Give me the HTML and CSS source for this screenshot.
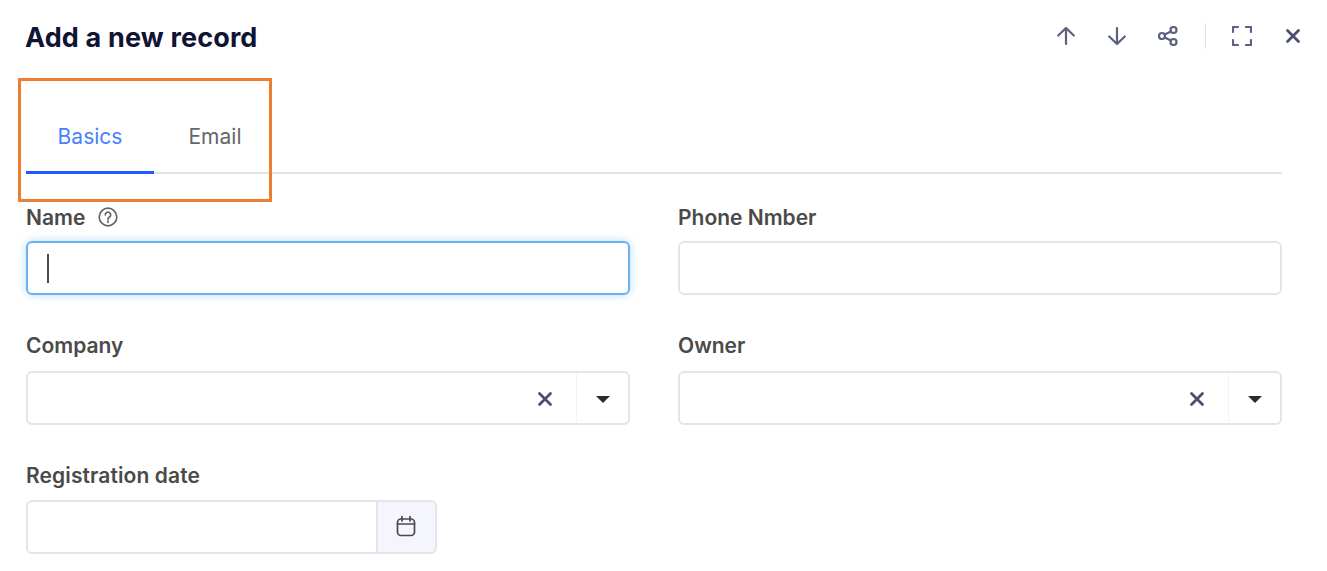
FILE: index.html
```html
<!DOCTYPE html>
<html lang="en">
<head>
<meta charset="utf-8">
<title>Add a new record</title>
<link rel="stylesheet" href="styles.css">
</head>
<body>
<div class="page">
  <header class="header">
    <h1 class="title">Add a new record</h1>
    <div class="actions">
      <svg class="icon" viewBox="0 0 20 20"><path d="M10 18V2M2.200 9.500 10 2l7.800 7.500"/></svg>
      <svg class="icon" viewBox="0 0 20 20"><path d="M10 2v16M2.200 10.500 10 18l7.800-7.500"/></svg>
      <svg class="icon" viewBox="0 0 20 20"><circle cx="4" cy="10" r="3"/><circle cx="15.500" cy="4" r="3"/><circle cx="15.500" cy="16" r="3"/><path d="m6.700 8.600 6.200-3.200M6.700 11.400l6.200 3.200"/></svg>
      <span class="divider"></span>
      <svg class="icon expand" viewBox="0 0 20 20"><path d="M1 6V1h5M14 1h5v5M19 14v5h-5M6 19H1v-5"/></svg>
      <svg class="icon close" viewBox="0 0 20 20"><path d="m4.500 4.500 11 11M15.500 4.500l-11 11"/></svg>
    </div>
  </header>
  <nav class="tabs">
    <span class="tab active">Basics</span>
    <span class="tab">Email</span>
  </nav>
  <form class="form">
    <div class="field">
      <label class="label tight">Name <svg class="help" viewBox="0 0 20 20"><circle cx="10" cy="10" r="8.800"/><path d="M7.300 7.800a2.700 2.700 0 1 1 4.200 2.300c-1 .6-1.500 1.100-1.500 2.200"/><path d="M10 14.200v1.100"/></svg></label>
      <div class="box focus"><span class="caret"></span></div>
    </div>
    <div class="field">
      <label class="label tight">Phone Nmber</label>
      <div class="box"></div>
    </div>
    <div class="field">
      <label class="label">Company</label>
      <div class="box select">
        <svg class="clear" viewBox="0 0 16 16"><path d="m2.500 2.500 11 11M13.500 2.500l-11 11"/></svg>
        <span class="arrow-cell"><span class="arrow"></span></span>
      </div>
    </div>
    <div class="field">
      <label class="label">Owner</label>
      <div class="box select">
        <svg class="clear" viewBox="0 0 16 16"><path d="m2.500 2.500 11 11M13.500 2.500l-11 11"/></svg>
        <span class="arrow-cell"><span class="arrow"></span></span>
      </div>
    </div>
    <div class="field">
      <label class="label mid">Registration date</label>
      <div class="box date">
        <span class="addon"><svg class="cal" viewBox="0 0 20 22"><rect x="1.500" y="4" width="17" height="16.500" rx="3.500"/><path d="M1.500 9h17M6 1.500v4.500M14 1.500v4.500"/></svg></span>
      </div>
    </div>
  </form>
  <div class="highlight"></div>
</div>
</body>
</html>
```

FILE: styles.css
```css
* { box-sizing: border-box; }
html, body { margin: 0; background: #fff; }
body { font-family: Inter, "Liberation Sans", sans-serif; overflow: hidden; }
.page { position: relative; width: 1327px; height: 571px; padding: 0 45px 0 26px; }
.header { height: 74px; display: flex; align-items: center; justify-content: space-between; margin-right: -21px; }
.title { margin: 1px 0 0 -1px; font-size: 27px; line-height: 32px; font-weight: 700; color: #0f1433; letter-spacing: 0.15px; }
.actions { display: flex; align-items: center; margin-bottom: 3px; }
.icon { fill: none; stroke: #5c6080; stroke-width: 2.200; stroke-linecap: round; stroke-linejoin: round; width: 20px; height: 20px; margin-left: 31px; }
.divider { width: 1px; height: 26px; background: #dfe1e6; margin: 0 26px 0 27px; }
.icon.expand { margin-left: 0; }
.icon.close { stroke: #4a4e70; stroke-width: 2.800; }
.tabs { display: flex; height: 100px; border-bottom: 2px solid #e2e4e7; }
.tab { display: flex; align-items: center; justify-content: center; height: 100px; padding-top: 24px; font-size: 21px; color: #666; width: 122px; flex: none; }
.tab.active { width: 128px; color: #4a80ff; border-bottom: 3px solid #1f5bff; padding-top: 27px; }
.form { display: grid; grid-template-columns: 604px 604px; column-gap: 48px; row-gap: 39px; margin-top: 32px; }
.field { display: flex; flex-direction: column; }
.label { display: flex; align-items: center; gap: 13px; height: 24px; margin-bottom: 13px; font-size: 21px; font-weight: 600; color: #4a4a4a; line-height: 24px; }
.label.tight { margin-bottom: 11px; }
.label.mid { margin-bottom: 12px; letter-spacing: 0.1px; }
.help { width: 20px; height: 20px; fill: none; stroke: #666; stroke-width: 1.700; stroke-linecap: round; margin-top: -3px; }
.box { height: 54px; border: 2px solid #e2e5ea; border-radius: 6px; background: #fff; display: flex; align-items: center; }
.box.focus { border-color: #69b1f0; box-shadow: 0 0 8px rgba(64, 150, 255, .35); padding-left: 19px; }
.caret { width: 2px; height: 29px; background: #4a4a4a; }
.select { justify-content: flex-end; }
.clear { width: 16px; height: 16px; fill: none; stroke: #4a4e70; stroke-width: 2.800; stroke-linecap: round; margin: 2px 23px 0 0; }
.arrow-cell { width: 52px; height: 100%; border-left: 1px solid #f3f4f6; display: flex; align-items: center; justify-content: center; padding-top: 2px; }
.arrow { border-left: 7px solid transparent; border-right: 7px solid transparent; border-top: 7px solid #2b2b2b; }
.date { width: 411px; justify-content: flex-end; }
.addon { width: 59px; height: 100%; background: #f4f5fd; border-left: 2px solid #e2e5ea; border-radius: 0 4px 4px 0; display: flex; align-items: center; justify-content: center; padding: 0 1px 2px 0; }
.cal { width: 20px; height: 22px; fill: none; stroke: #4a4a4a; stroke-width: 1.700; stroke-linecap: round; }
.highlight { position: absolute; left: 18px; top: 78px; width: 254px; height: 124px; border: 3px solid #ed7d31; pointer-events: none; }
```
